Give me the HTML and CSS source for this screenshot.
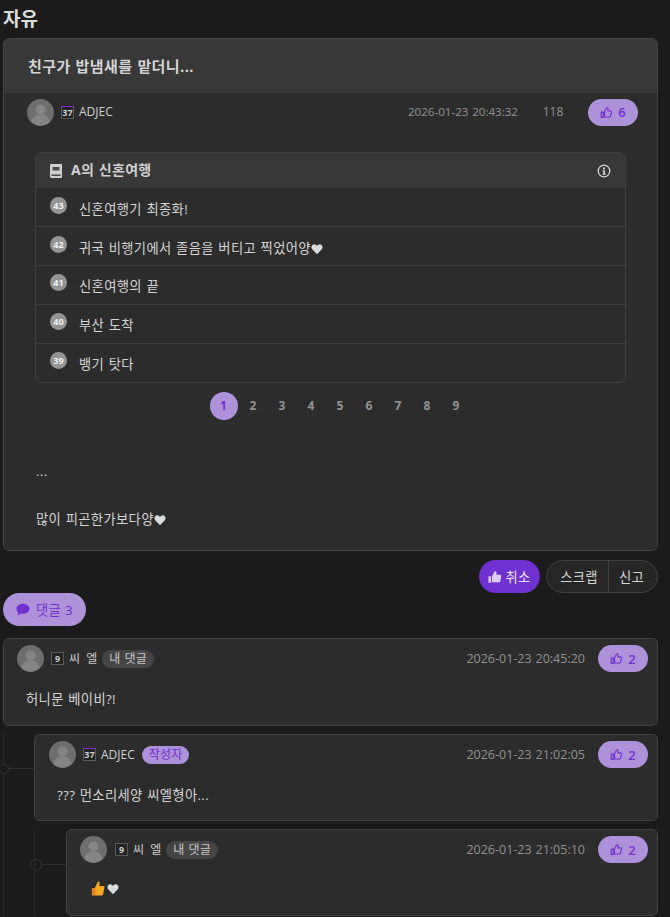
FILE: index.html
```html
<!DOCTYPE html>
<html lang="ko">
<head>
    <meta charset="UTF-8">
    <meta name="viewport" content="width=device-width, initial-scale=1.0">
    <title>자유</title>
    <link rel="stylesheet" href="styles.css">
</head>
<body>
    <svg class="sprites" width="0" height="0">
        <symbol id="avatar" viewBox="0 0 27 27">
            <circle cx="13.5" cy="13.5" r="13.5" fill="#6e6e6e"/>
            <circle cx="13.5" cy="10.5" r="5" fill="#858585"/>
            <path d="M4.5 23c.5-5 4-7.500 9-7.500s8.500 2.500 9 7.500a13.500 13.500 0 0 1-18 0z" fill="#858585"/>
        </symbol>
        <symbol id="thumb" viewBox="0 0 16 16">
            <path d="M1.500 7.500h2.500v6.500h-2.500z M5.500 7l2.500-4.500c.3-.6 1.800-.5 1.800 1v2.500h3.200c.9 0 1.400.7 1.200 1.500l-1.200 5c-.2.800-.7 1-1.300 1h-6.200z" fill="none" stroke="currentColor" stroke-width="1.400" stroke-linejoin="round"/>
        </symbol>
        <symbol id="heart" viewBox="0 0 12 12">
            <path d="M6 11.300 1.200 6.200C-.3 4.500.7 1.300 3.200 1.300c1.300 0 2.200.7 2.800 1.700.6-1 1.500-1.700 2.800-1.700 2.500 0 3.500 3.200 2 4.900z" fill="#d8dcdf"/>
        </symbol>
    </svg>

    <h1 class="board-name">자유</h1>

    <article class="post">
        <h2 class="post-title">친구가 밥냄새를 맡더니...</h2>
        <div class="post-meta">
            <svg class="avatar"><use href="#avatar"/></svg>
            <span class="level level-purple">37</span>
            <span class="nick">ADJEC</span>
            <span class="date">2026-01-23 20:43:32</span>
            <span class="views">118</span>
            <button class="like-btn"><svg class="thumb"><use href="#thumb"/></svg>6</button>
        </div>

        <section class="series">
            <div class="series-head">
                <svg class="book" viewBox="0 0 12 14"><path d="M0 1.500C0 .7.600 0 1.400 0H12V14H1.400C.6 14 0 13.300 0 12.500z" fill="#cfcfcf"/><path d="M2.500 3h7v3.500h-7z M1.500 10.500h9v1.500h-9z" fill="#4a4a4a"/></svg>
                <span class="series-name">A의 신혼여행</span>
                <svg class="info" viewBox="0 0 14 14"><circle cx="7" cy="7" r="5.800" fill="none" stroke="#d5d5d5" stroke-width="1.300"/><path d="M6 3.500h2v1.800H6z M5.600 6.200h2.400v3.600h.8v1H5.400v-1h.9V7.200h-.7z" fill="#d5d5d5"/></svg>
            </div>
            <ol class="series-list">
                <li><span class="num">43</span><span>신혼여행기 최종화!</span></li>
                <li><span class="num">42</span><span>귀국 비행기에서 졸음을 버티고 찍었어양<svg class="heart"><use href="#heart"/></svg></span></li>
                <li><span class="num">41</span><span>신혼여행의 끝</span></li>
                <li><span class="num">40</span><span>부산 도착</span></li>
                <li><span class="num">39</span><span>뱅기 탓다</span></li>
            </ol>
        </section>

        <nav class="pages">
            <span class="page current">1</span>
            <span class="page">2</span>
            <span class="page">3</span>
            <span class="page">4</span>
            <span class="page">5</span>
            <span class="page">6</span>
            <span class="page">7</span>
            <span class="page">8</span>
            <span class="page">9</span>
        </nav>

        <div class="post-body">
            <p class="dots">...</p>
            <p>많이 피곤한가보다양<svg class="heart"><use href="#heart"/></svg></p>
        </div>
    </article>

    <div class="post-actions">
        <button class="cancel-btn">
            <svg class="thumb-solid" viewBox="0 0 16 16"><path d="M.5 7h3v7.500h-3z M4.500 7.200 7.500 1.800c.4-.8 2.200-.6 2.200 1v2.700h4c1 0 1.700.8 1.500 1.700l-1.200 5.900c-.2.700-.7 1-1.400 1H4.500z" fill="#dccdf5"/></svg>취소
        </button>
        <div class="btn-group">
            <button>스크랩</button>
            <button>신고</button>
        </div>
    </div>

    <button class="comment-toggle">
        <svg class="bubble" viewBox="0 0 14 13"><path d="M7 .8c3.600 0 6.500 2.200 6.500 5s-2.900 5-6.500 5c-.8 0-1.600-.1-2.300-.3L1.500 12.500l.8-2.600C1.200 9 .5 7.500.5 5.800c0-2.800 2.900-5 6.500-5z" fill="currentColor"/></svg>댓글 3
    </button>

    <section class="comments">
        <div class="comment">
            <div class="comment-head">
                <svg class="avatar"><use href="#avatar"/></svg>
                <span class="level">9</span>
                <span class="nick">씨 엘</span>
                <span class="tag">내 댓글</span>
                <span class="date">2026-01-23 20:45:20</span>
                <button class="like-btn"><svg class="thumb"><use href="#thumb"/></svg>2</button>
            </div>
            <p class="comment-text">허니문 베이비?!</p>
        </div>

        <div class="comment reply-1">
            <div class="comment-head">
                <svg class="avatar"><use href="#avatar"/></svg>
                <span class="level level-purple">37</span>
                <span class="nick">ADJEC</span>
                <span class="tag tag-writer">작성자</span>
                <span class="date">2026-01-23 21:02:05</span>
                <button class="like-btn"><svg class="thumb"><use href="#thumb"/></svg>2</button>
            </div>
            <p class="comment-text">??? 먼소리세양 씨엘형아...</p>
        </div>

        <div class="comment reply-2">
            <div class="comment-head">
                <svg class="avatar"><use href="#avatar"/></svg>
                <span class="level">9</span>
                <span class="nick">씨 엘</span>
                <span class="tag">내 댓글</span>
                <span class="date">2026-01-23 21:05:10</span>
                <button class="like-btn"><svg class="thumb"><use href="#thumb"/></svg>2</button>
            </div>
            <p class="comment-text emoji-line">
                <svg class="emoji" viewBox="0 0 14 15"><path d="M4 6.500 6.800.8c.8-.6 2 0 1.900 1.200L8.300 5h3.900c1.100 0 1.500 1 1.200 1.800l-1.300 6.500c-.2.800-.8 1.200-1.600 1.200H4z" fill="#f5a623"/><path d="M.8 7h3.500v7.500H.8z" fill="#e8811a"/></svg>
                <svg class="heart"><use href="#heart"/></svg>
            </p>
        </div>
    </section>
</body>
</html>
```

FILE: styles.css
```css
:root {
    --bg: #1b1b1b;
    --card: #2c2c2c;
    --card-head: #383838;
    --border: #424242;
    --text: #d4d4d4;
    --muted: #929292;
    --purple: #6f31cf;
    --purple-soft: #ae92d9;
}

* {
    box-sizing: border-box;
    margin: 0;
    padding: 0;
}

body {
    font-family: "Open Sans", "Noto Sans CJK KR", sans-serif;
    font-size: 13.3px;
    letter-spacing: 0.35px;
    word-spacing: 0.7px;
    line-height: 18px;
    color: var(--text);
    background-color: var(--bg);
    padding: 0 12px 0 3px;
    width: 670px;
}

button {
    font: inherit;
    letter-spacing: inherit;
    border: none;
    cursor: pointer;
}

.sprites {
    position: absolute;
}

.board-name {
    font-size: 19px;
    line-height: 38px;
    font-weight: 700;
    letter-spacing: 0;
    color: #dcdcdc;
}

.post {
    background-color: var(--card);
    border: 1px solid var(--border);
    border-radius: 6px;
    height: 513px;
    overflow: hidden;
}

.post-title {
    height: 54px;
    padding-left: 24px;
    background-color: var(--card-head);
    font-size: 15px;
    letter-spacing: 0.4px;
    line-height: 54px;
    font-weight: 700;
    color: #d4d4d4;
}

.post-meta {
    display: flex;
    align-items: center;
    height: 38px;
    padding: 0 19px 0 23px;
}

.avatar {
    width: 27px;
    height: 27px;
    flex: none;
}

.level {
    width: 13px;
    height: 13px;
    margin-left: 7px;
    margin-right: 5px;
    border: 1px solid #5a5a5a;
    background-color: #242424;
    font-size: 9px;
    letter-spacing: 0;
    line-height: 11px;
    font-weight: 700;
    text-align: center;
    color: #cfcfcf;
}

.level-purple {
    border-top-color: #8a2be2;
}

.nick {
    color: #d0d0d0;
    font-size: 12px;
    letter-spacing: 0;
    word-spacing: 3px;
}

.date {
    margin-left: auto;
    color: var(--muted);
    font-size: 11.6px;
    letter-spacing: 0;
}

.views {
    width: 70px;
    text-align: center;
    color: var(--muted);
    font-size: 12px;
    letter-spacing: 0;
}

.like-btn {
    display: flex;
    align-items: center;
    justify-content: center;
    gap: 5px;
    width: 50px;
    height: 27px;
    border-radius: 14px;
    background-color: var(--purple-soft);
    color: var(--purple);
    font-size: 13px;
    letter-spacing: 0;
    font-weight: 600;
}

.thumb {
    width: 13px;
    height: 13px;
}

.series {
    width: 591px;
    margin: 21px 0 0 31px;
    border: 1px solid #3f3f3f;
    border-radius: 6px;
    overflow: hidden;
}

.series-head {
    display: flex;
    align-items: center;
    height: 35px;
    padding: 0 14px;
    background-color: var(--card-head);
}

.book {
    width: 12px;
    height: 14px;
    margin-right: 9px;
}

.series-name {
    font-size: 14px;
    letter-spacing: 0.3px;
    line-height: 16px;
    font-weight: 700;
    color: #d0d0d0;
    margin-top: -2px;
}

.info {
    width: 14px;
    height: 14px;
    margin-left: auto;
}

.series-list {
    list-style: none;
}

.series-list li {
    display: flex;
    gap: 12px;
    height: 39px;
    padding: 8px 14px 0;
    border-top: 1px solid #3f3f3f;
    line-height: 20px;
}

.series-list li:first-child {
    border-top: none;
    height: 38px;
    padding-top: 9px;
}

.series-list li:nth-child(2) {
    padding-top: 9px;
}

.series-list li > span:last-child {
    padding-top: 2px;
}

.num {
    width: 17px;
    height: 17px;
    flex: none;
    border-radius: 50%;
    background-color: #949494;
    color: #f2f2f2;
    font-size: 9px;
    letter-spacing: 0;
    line-height: 17px;
    font-weight: 700;
    text-align: center;
}

.heart {
    width: 12px;
    height: 12px;
    vertical-align: -2px;
}

.pages {
    display: flex;
    align-items: center;
    justify-content: center;
    height: 28px;
    margin: 9px 0 0 -1px;
    padding-left: 41px;
    padding-right: 21px;
}

.page {
    width: 29px;
    text-align: center;
    color: var(--muted);
    font-size: 12px;
    letter-spacing: 0;
    font-weight: 700;
}

.page.current {
    width: 28px;
    height: 28px;
    margin-right: 1px;
    border-radius: 50%;
    background-color: var(--purple-soft);
    color: var(--purple);
    line-height: 28px;
}

.post-body {
    padding: 42px 32px 0;
}

.dots {
    height: 48px;
}

.post-actions {
    display: flex;
    justify-content: flex-end;
    gap: 6px;
    margin-top: 9px;
}

.cancel-btn {
    display: flex;
    align-items: center;
    justify-content: center;
    gap: 3px;
    width: 61px;
    height: 33px;
    border-radius: 17px;
    background-color: var(--purple);
    color: #eee6fa;
}

.thumb-solid {
    width: 14px;
    height: 14px;
}

.btn-group {
    display: flex;
    height: 33px;
    border: 1px solid var(--border);
    border-radius: 17px;
    background-color: #262626;
    overflow: hidden;
}

.btn-group button {
    background: none;
    color: var(--text);
    width: 61px;
    padding-left: 3px;
}

.btn-group button + button {
    width: 49px;
    padding: 0 3px 0 0;
    border-left: 1px solid var(--border);
}

.comment-toggle {
    display: flex;
    align-items: center;
    justify-content: center;
    gap: 6px;
    width: 83px;
    height: 33px;
    border-radius: 17px;
    background-color: var(--purple-soft);
    color: var(--purple);
}

.bubble {
    width: 14px;
    height: 13px;
}

.comments {
    position: relative;
    margin-top: 12px;
}

.comment {
    position: relative;
    height: 88px;
    margin-bottom: 8px;
    padding: 6px 9px 0 13px;
    background-color: var(--card);
    border: 1px solid var(--border);
    border-radius: 6px;
}

.comment-head {
    display: flex;
    align-items: center;
    height: 27px;
}

.comment-head .date {
    margin-right: 13px;
    font-size: 12.5px;
}

.tag {
    height: 18px;
    margin-left: 5px;
    padding: 0 7px;
    border-radius: 9px;
    background-color: #454545;
    color: #c8c8c8;
    font-size: 12px;
    letter-spacing: 0.2px;
    line-height: 18px;
}

.tag-writer {
    margin-left: 7px;
    background-color: var(--purple-soft);
    color: var(--purple);
}

.comment-text {
    margin: 18px 0 0 9px;
}

.reply-1 {
    margin-left: 31px;
    height: 87px;
    padding-left: 14px;
}

.reply-2 {
    margin-left: 63px;
    height: 87px;
    margin-bottom: 0;
}

.reply-2 .level {
    margin-left: 8px;
}

.reply-1 .comment-text {
    margin-left: 8px;
}

.reply-2 .comment-text {
    margin-left: 11px;
}

/* thread lines */
.reply-1::before,
.reply-2::before {
    content: "";
    position: absolute;
    left: -32px;
    top: 33px;
    width: 31px;
    height: 1px;
    background-color: #303030;
}

.reply-2::before {
    top: 34px;
}

.reply-1::after {
    content: "";
    position: absolute;
    left: -36px;
    top: 29px;
    width: 8px;
    height: 8px;
    border: 1px solid #343434;
    border-radius: 50%;
    background-color: var(--bg);
}

.reply-2::after {
    content: "";
    position: absolute;
    left: -37px;
    top: 29px;
    width: 10px;
    height: 10px;
    border: 1px solid #343434;
    border-radius: 50%;
    background-color: var(--bg);
}

.comments::before,
.comments::after {
    content: "";
    position: absolute;
    left: 0;
    top: 96px;
    bottom: 0;
    width: 1px;
    background-color: #2a2a2a;
}

.comments::after {
    left: 31px;
    top: 191px;
}

.emoji-line {
    display: flex;
    align-items: center;
    gap: 2px;
}

.emoji {
    width: 14px;
    height: 15px;
}
```
